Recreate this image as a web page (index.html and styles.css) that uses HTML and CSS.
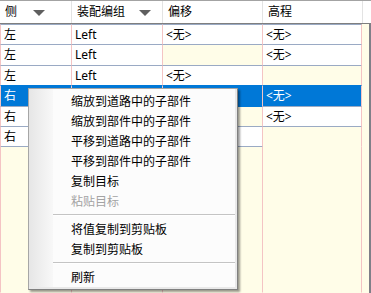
FILE: index.html
```html
<!DOCTYPE html>
<html>
<head>
<meta charset="utf-8">
<link rel="stylesheet" href="styles.css">
</head>
<body>
<div class="grid">
  <div class="head">
    <div class="hc c1"><span>侧</span><i class="arrow"></i></div>
    <div class="hc c2"><span>装配编组</span><i class="arrow"></i></div>
    <div class="hc c3">偏移</div>
    <div class="hc c4">高程</div>
    <div class="hc fill"></div>
  </div>
  <div class="body">
    <div class="row">
      <div class="cell c1 w">左</div>
      <div class="cell c2 w">Left</div>
      <div class="cell c3 w">&lt;无&gt;</div>
      <div class="cell c4 w">&lt;无&gt;</div>
      <div class="cell fill"></div>
    </div>
    <div class="row">
      <div class="cell c1 w">左</div>
      <div class="cell c2 w">Left</div>
      <div class="cell c3"></div>
      <div class="cell c4 w">&lt;无&gt;</div>
      <div class="cell fill"></div>
    </div>
    <div class="row">
      <div class="cell c1 w">左</div>
      <div class="cell c2 w">Left</div>
      <div class="cell c3 w">&lt;无&gt;</div>
      <div class="cell c4"></div>
      <div class="cell fill"></div>
    </div>
    <div class="row">
      <div class="cell c1 sel">右</div>
      <div class="cell c2 sel"></div>
      <div class="cell c3 sel"></div>
      <div class="cell c4 sel">&lt;无&gt;</div>
      <div class="cell fill"></div>
    </div>
    <div class="row">
      <div class="cell c1 w">右</div>
      <div class="cell c2 w"></div>
      <div class="cell c3"></div>
      <div class="cell c4 w">&lt;无&gt;</div>
      <div class="cell fill"></div>
    </div>
    <div class="row">
      <div class="cell c1 w">右</div>
      <div class="cell c2 w"></div>
      <div class="cell c3 w"></div>
      <div class="cell c4"></div>
      <div class="cell fill"></div>
    </div>
    <div class="row rest">
      <div class="cell c1"></div>
      <div class="cell c2"></div>
      <div class="cell c3"></div>
      <div class="cell c4"></div>
      <div class="cell fill"></div>
    </div>
  </div>
</div>

<div class="menu">
  <div class="panel">
    <div class="item">缩放到道路中的子部件</div>
    <div class="item">缩放到部件中的子部件</div>
    <div class="item">平移到道路中的子部件</div>
    <div class="item">平移到部件中的子部件</div>
    <div class="item">复制目标</div>
    <div class="item disabled">粘贴目标</div>
    <div class="sep"></div>
    <div class="item">将值复制到剪贴板</div>
    <div class="item">复制到剪贴板</div>
    <div class="sep"></div>
    <div class="item">刷新</div>
  </div>
</div>
</body>
</html>
```

FILE: styles.css
```css
* { box-sizing: border-box; }
html, body {
  margin: 0;
  padding: 0;
  width: 371px;
  height: 293px;
  overflow: hidden;
  background: #fffde8;
}
body {
  font-family: "Noto Sans", "Noto Sans CJK SC", sans-serif;
  font-size: 12px;
  color: #000;
  position: relative;
}
.grid {
  display: flex;
  flex-direction: column;
  height: 293px;
}
.head {
  display: flex;
  height: 24px;
  background: #fff;
  border-top: 1px solid #a3a3a3;
  border-bottom: 1px solid #7f7f7f;
  flex: none;
}
.hc {
  border-right: 1px solid #e3e3e3;
  padding-left: 5px;
  line-height: 22px;
  display: flex;
  align-items: center;
  white-space: nowrap;
}
.hc.c1 { width: 72px; }
.hc.c2 { width: 91px; }
.hc.c3 { width: 100px; }
.hc.c4 { width: 100px; }
.hc.fill { flex: 1; border-right: none; }
.arrow {
  display: inline-block;
  width: 0;
  height: 0;
  border-left: 6px solid transparent;
  border-right: 6px solid transparent;
  border-top: 6px solid #5f5f5f;
  margin-left: 16px;
  margin-top: 2px;
}
.c2 .arrow { margin-left: 14px; }
.body {
  flex: 1;
  display: flex;
  flex-direction: column;
  border-right: 2px solid #7f7f88;
}
.row {
  display: flex;
  height: 21.4px;
  margin-top: -1px;
  flex: none;
}
.row:first-child { margin-top: 0; }
.row.rest { flex: 1; height: auto; }
.cell {
  border-top: 1px solid transparent;
  border-bottom: 1px solid transparent;
  border-right: 1px solid #f4c4c4;
  padding-left: 3px;
  line-height: 19px;
  white-space: nowrap;
  overflow: hidden;
}
.cell.c1 { width: 72px; border-left: 1px solid #f4c4c4; }
.cell.c2 { width: 91px; }
.cell.c3 { width: 100px; }
.cell.c4 { width: 99px; }
.cell.fill { flex: 1; border-right: none; }
.cell.w {
  background: #fff;
  border-top-color: #9aaac4;
  border-bottom-color: #9aaac4;
}
.cell.sel {
  background: #0078d7;
  color: #fff;
  border-top-color: #0078d7;
  border-bottom-color: #0078d7;
}

.menu {
  position: absolute;
  left: 28px;
  top: 88px;
  width: 210px;
  border: 1px solid #a6a6a6;
  border-right-color: #808080;
  border-bottom-color: #808080;
  background: #e9e9e9;
  padding: 0 2px 2px 0;
  box-shadow: 2px 2px 2px rgba(0, 0, 0, 0.4);
  font-family: "Noto Sans CJK SC", sans-serif;
}
.panel {
  padding-top: 2px;
  background: linear-gradient(to right, #e6e6e6, #f8f8f8) 0 0 / 24px 100% no-repeat, #fcfcfc;
}
.item {
  height: 20px;
  line-height: 20px;
  padding-left: 42px;
  white-space: nowrap;
}
.item.disabled { color: #a3a3a3; }
.sep {
  height: 8px;
  margin-left: 24px;
  padding-top: 3px;
}
.sep::before {
  content: "";
  display: block;
  height: 1px;
  background: #c4c4c4;
  border-bottom: 1px solid #fff;
  box-sizing: content-box;
}
```
